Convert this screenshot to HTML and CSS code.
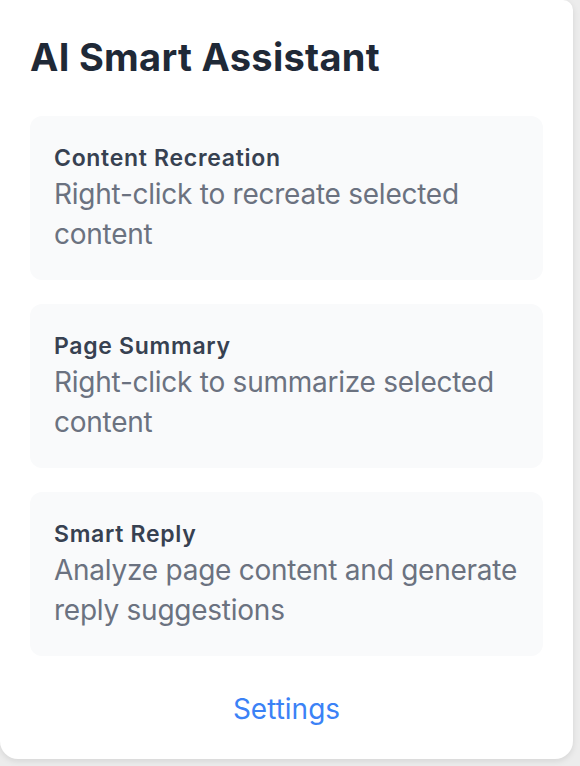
FILE: index.html
```html
<!DOCTYPE html>
<html lang="en">
<head>
<meta charset="utf-8">
<title>AI Smart Assistant</title>
<link rel="stylesheet" href="styles.css">
</head>
<body>
<div class="popup">
  <h1 class="title">AI Smart Assistant</h1>
  <div class="features">
    <div class="feature">
      <div class="feature-title">Content Recreation</div>
      <div class="feature-desc">Right-click to recreate selected content</div>
    </div>
    <div class="feature">
      <div class="feature-title">Page Summary</div>
      <div class="feature-desc">Right-click to summarize selected content</div>
    </div>
    <div class="feature">
      <div class="feature-title">Smart Reply</div>
      <div class="feature-desc">Analyze page content and generate reply suggestions</div>
    </div>
  </div>
  <div class="footer"><a class="settings-link" href="#">Settings</a></div>
</div>
</body>
</html>
```
FILE: styles.css
```css
html, body {
  margin: 0;
  padding: 0;
}
body {
  background: #ececec;
  width: 580px;
  height: 766px;
  overflow: hidden;
  font-family: Inter, "Noto Sans", "Liberation Sans", sans-serif;
}
.popup {
  box-sizing: border-box;
  width: 573px;
  height: 759px;
  background: #ffffff;
  border-radius: 0 10px 18px 18px;
  box-shadow: 0 2px 6px rgba(0, 0, 0, 0.10);
  padding: 34px 30px 31px 30px;
}
.title {
  margin: 0 0 36px 0;
  font-size: 38px;
  line-height: 46px;
  letter-spacing: 0.3px;
  font-weight: 700;
  color: #1f2937;
}
.features {
  display: flex;
  flex-direction: column;
  gap: 24px;
}
.feature {
  background: #f9fafb;
  border-radius: 12px;
  padding: 26px 24px;
}
.feature-title {
  font-size: 23px;
  line-height: 32px;
  letter-spacing: 0.7px;
  font-weight: 600;
  color: #374151;
}
.feature-desc {
  font-size: 28px;
  line-height: 40px;
  letter-spacing: -0.25px;
  color: #6b7280;
}
.footer {
  margin-top: 33px;
  text-align: center;
  font-size: 28px;
  line-height: 40px;
}
.settings-link {
  color: #3b82f6;
  text-decoration: none;
}
```
